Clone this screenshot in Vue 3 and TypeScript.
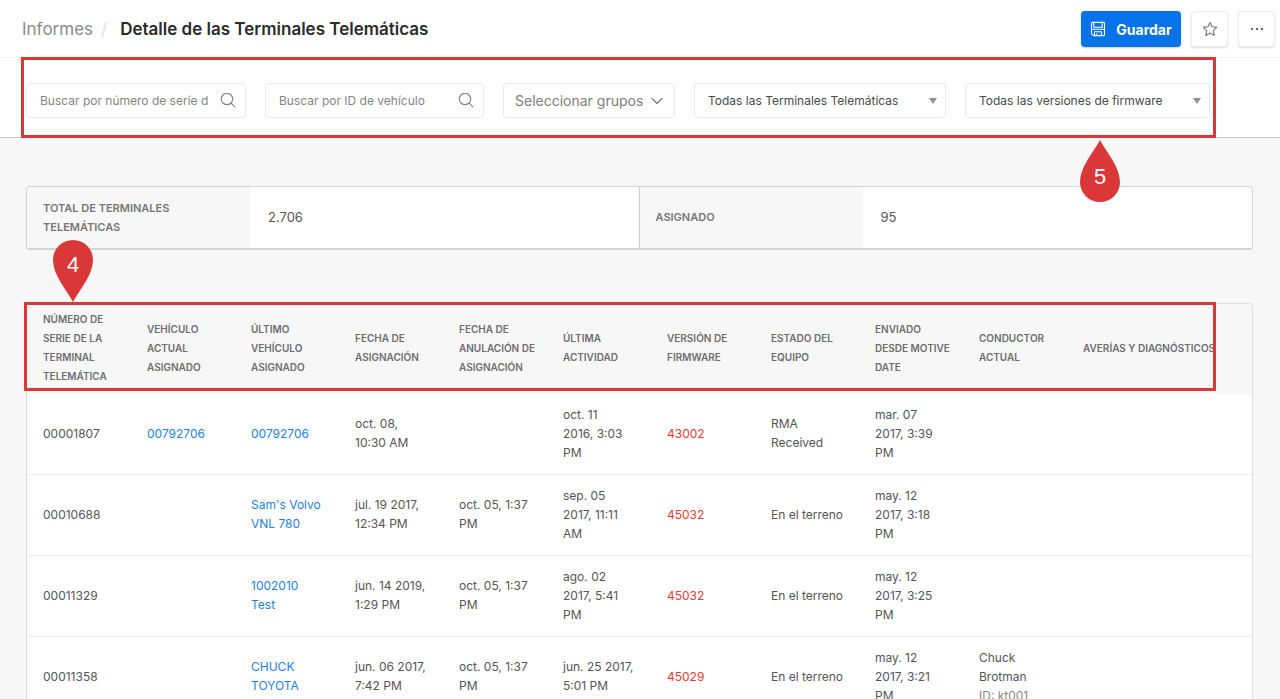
<script setup lang="ts">
import { ref } from 'vue'

interface Row {
  serial: string
  current: string
  last: string
  assigned: string
  unassigned: string
  activity: string
  firmware: string
  status: string
  shipped: string
  driver: string
  driverId: string
}

const columns: string[] = [
  'Número de\nserie de la\nterminal\ntelemática',
  'Vehículo\nactual\nasignado',
  'Último\nvehículo\nasignado',
  'Fecha de\nasignación',
  'Fecha de\nanulación de\nasignación',
  'Última\nactividad',
  'Versión de\nfirmware',
  'Estado del\nequipo',
  'Enviado\ndesde Motive\ndate',
  'Conductor\nactual',
  'Averías y diagnósticos',
]

const rows: Row[] = [
  {
    serial: '00001807', current: '00792706', last: '00792706',
    assigned: 'oct. 08,\n10:30 AM', unassigned: '', activity: 'oct. 11\n2016, 3:03\nPM',
    firmware: '43002', status: 'RMA\nReceived', shipped: 'mar. 07\n2017, 3:39\nPM',
    driver: '', driverId: '',
  },
  {
    serial: '00010688', current: '', last: "Sam's Volvo\nVNL 780",
    assigned: 'jul. 19 2017,\n12:34 PM', unassigned: 'oct. 05, 1:37\nPM', activity: 'sep. 05\n2017, 11:11\nAM',
    firmware: '45032', status: 'En el terreno', shipped: 'may. 12\n2017, 3:18\nPM',
    driver: '', driverId: '',
  },
  {
    serial: '00011329', current: '', last: '1002010\nTest',
    assigned: 'jun. 14 2019,\n1:29 PM', unassigned: 'oct. 05, 1:37\nPM', activity: 'ago. 02\n2017, 5:41\nPM',
    firmware: '45032', status: 'En el terreno', shipped: 'may. 12\n2017, 3:25\nPM',
    driver: '', driverId: '',
  },
  {
    serial: '00011358', current: '', last: 'CHUCK\nTOYOTA',
    assigned: 'jun. 06 2017,\n7:42 PM', unassigned: 'oct. 05, 1:37\nPM', activity: 'jun. 25 2017,\n5:01 PM',
    firmware: '45029', status: 'En el terreno', shipped: 'may. 12\n2017, 3:21\nPM',
    driver: 'Chuck\nBrotman', driverId: 'ID: kt001',
  },
]

const serialQuery = ref('')
const vehicleQuery = ref('')
const gateway = ref('all')
const firmware = ref('all')
</script>

<template>
  <div class="page">
    <header class="topbar">
      <nav class="crumbs">
        <a href="#" class="crumb">Informes</a>
        <span class="slash">/</span>
        <h1>Detalle de las Terminales Telemáticas</h1>
      </nav>
      <div class="actions">
        <button type="button" class="save">
          <svg width="16" height="16" viewBox="0 0 16 16" fill="none" stroke="currentColor" stroke-width="1.1" stroke-linejoin="round">
            <path d="M1.500 2.200a.8.8 0 0 1 .8-.8h11.400a.8.8 0 0 1 .8.8v11.600a.8.8 0 0 1-.8.8H3.500l-2-2z" />
            <path d="M3.800 1.400v4.800h8.400V1.400M1.500 8.300h13M4.500 14.600v-3.800h7v3.800M6.800 12.600v2" />
          </svg>
          Guardar
        </button>
        <button type="button" class="square" aria-label="Favorito">
          <svg width="16" height="16" viewBox="0 0 16 16" fill="none" stroke="#777" stroke-width="1.1" stroke-linejoin="round">
            <path d="M8 1.500l2 4.300 4.700.6-3.400 3.300.8 4.700L8 12.100l-4.100 2.300.8-4.700L1.300 6.400 6 5.800z" />
          </svg>
        </button>
        <button type="button" class="square" aria-label="Más opciones">
          <svg width="16" height="16" viewBox="0 0 16 16" fill="#444">
            <circle cx="3" cy="8" r="1.100" /><circle cx="8" cy="8" r="1.100" /><circle cx="13" cy="8" r="1.100" />
          </svg>
        </button>
      </div>
    </header>

    <section class="filters">
      <label class="field search">
        <input v-model="serialQuery" type="text" aria-label="Buscar por número de serie" placeholder="Buscar por número de serie d">
        <svg width="16" height="16" viewBox="0 0 16 16" fill="none" stroke="#888" stroke-width="1.200" stroke-linecap="round">
          <circle cx="7" cy="6" r="5.700" /><path d="M11.200 10.200l3.600 3.600" />
        </svg>
      </label>
      <label class="field search">
        <input v-model="vehicleQuery" type="text" aria-label="Buscar por ID de vehículo" placeholder="Buscar por ID de vehículo">
        <svg width="16" height="16" viewBox="0 0 16 16" fill="none" stroke="#888" stroke-width="1.200" stroke-linecap="round">
          <circle cx="7" cy="6" r="5.700" /><path d="M11.200 10.200l3.600 3.600" />
        </svg>
      </label>
      <button type="button" class="field groups">
        <span>Seleccionar grupos</span>
        <svg width="12" height="8" viewBox="0 0 12 8" fill="none" stroke="#777" stroke-width="1.100" stroke-linecap="round" stroke-linejoin="round">
          <path d="M1 1.500l5 5 5-5" />
        </svg>
      </button>
      <div class="field pick">
        <select v-model="gateway" aria-label="Terminales Telemáticas">
          <option value="all">Todas las Terminales Telemáticas</option>
        </select>
        <svg width="8" height="6" viewBox="0 0 8 6" fill="#8595a3"><path d="M0 0h8L4 6z" /></svg>
      </div>
      <div class="field pick">
        <select v-model="firmware" aria-label="Versiones de firmware">
          <option value="all">Todas las versiones de firmware</option>
        </select>
        <svg width="8" height="6" viewBox="0 0 8 6" fill="#8595a3"><path d="M0 0h8L4 6z" /></svg>
      </div>
      <div class="frame frame-filters"></div>
      <div class="pin pin-up">
        <svg width="40" height="62" viewBox="0 0 40 62"><path d="M20 0C27 13 40 27 40 42a20 20 0 0 1-40 0C0 27 13 13 20 0z" fill="#da3838" /></svg>
        <span>5</span>
      </div>
    </section>

    <main>
      <dl class="summary">
        <div class="stat">
          <dt>Total de terminales telemáticas</dt>
          <dd>2.706</dd>
        </div>
        <div class="stat">
          <dt>Asignado</dt>
          <dd>95</dd>
        </div>
      </dl>

      <div class="card">
        <table>
          <thead>
            <tr>
              <th v-for="c in columns" :key="c" scope="col">{{ c }}</th>
            </tr>
          </thead>
          <tbody>
            <tr v-for="r in rows" :key="r.serial">
              <td>{{ r.serial }}</td>
              <td><a v-if="r.current" href="#">{{ r.current }}</a></td>
              <td><a href="#">{{ r.last }}</a></td>
              <td>{{ r.assigned }}</td>
              <td>{{ r.unassigned }}</td>
              <td>{{ r.activity }}</td>
              <td class="alert">{{ r.firmware }}</td>
              <td>{{ r.status }}</td>
              <td>{{ r.shipped }}</td>
              <td>{{ r.driver }}<div v-if="r.driverId" class="muted">{{ r.driverId }}</div></td>
              <td></td>
            </tr>
          </tbody>
        </table>
        <div class="frame frame-columns"></div>
        <div class="pin pin-down">
          <svg width="40" height="62" viewBox="0 0 40 62"><path d="M20 62C27 49 40 35 40 20a20 20 0 0 0-40 0C0 35 13 49 20 62z" fill="#da3838" /></svg>
          <span>4</span>
        </div>
      </div>
    </main>
  </div>
</template>

<style>
body {
  margin: 0;
  background: #f7f7f7;
  overflow: hidden;
}
</style>

<style scoped>
.page {
  min-height: 100vh;
  background: #f7f7f7;
  color: #555;
  font-family: Inter, "Liberation Sans", sans-serif;
  font-size: 12px;
  line-height: 19px;
}
.page *,
.page *::before {
  box-sizing: border-box;
}
a {
  color: #1a82ea;
  text-decoration: none;
}
button,
input,
select {
  font-family: inherit;
}

.topbar {
  display: flex;
  align-items: center;
  justify-content: space-between;
  height: 58px;
  padding: 0 5px 0 22px;
  background: #fff;
  box-shadow: inset 0 -1px #f6f6f6;
}
.crumbs {
  display: flex;
  align-items: center;
  font-size: 17px;
  line-height: 24px;
}
.crumb {
  color: #8c8c8c;
}
.slash {
  margin: 0 13px 0 8px;
  color: #ddd;
}
h1 {
  margin: 0;
  color: #2b2b2b;
  font-size: 17px;
  font-weight: 600;
}
.actions {
  display: flex;
  gap: 10px;
}
.save,
.square {
  display: flex;
  align-items: center;
  justify-content: center;
  height: 36px;
  border-radius: 4px;
}
.save {
  gap: 10px;
  width: 100px;
  padding: 0;
  border: 0;
  background: #0673e8;
  box-shadow: 0 1px 2px rgba(0, 0, 0, 0.2);
  color: #fff;
  font-size: 14px;
  font-weight: 700;
}
.square {
  width: 37px;
  padding: 0;
  border: 1px solid #eee;
  background: #fff;
  box-shadow: 0 1px 2px rgba(0, 0, 0, 0.14);
}

.filters {
  position: relative;
  display: grid;
  grid-template-columns: minmax(0, 220fr) minmax(0, 219fr) minmax(0, 172fr) minmax(0, 252fr) minmax(0, 245fr);
  gap: 19px;
  padding: 25px 70px 19px 26px;
  border-bottom: 1px solid #ccc;
  background: #fff;
}
.field {
  display: flex;
  align-items: center;
  height: 35px;
  border: 1px solid #e9e9e9;
  border-radius: 4px;
  background: #fff;
}
.search {
  padding: 0 9px 0 13px;
  gap: 4px;
}
.search input {
  flex: 1;
  min-width: 0;
  padding: 0;
  border: 0;
  outline: 0;
  background: none;
  color: #444;
  font-size: 12px;
}
.search input::placeholder {
  color: #858585;
  opacity: 1;
}
.groups {
  justify-content: space-between;
  padding: 0 11px;
  color: #808080;
  font-size: 14px;
  white-space: nowrap;
}
.pick {
  position: relative;
}
.pick select {
  width: 100%;
  height: 100%;
  padding: 0 28px 0 13px;
  border: 0;
  outline: 0;
  appearance: none;
  background: none;
  color: #4a4a4a;
  font-size: 12px;
}
.pick svg {
  position: absolute;
  right: 8px;
  pointer-events: none;
}

main {
  padding: 48px 27px 0 26px;
}
.summary {
  display: grid;
  grid-template-columns: 1fr 1fr;
  margin: 0 0 53px;
  border: 1px solid #d4d4d4;
  border-bottom-width: 2px;
  border-radius: 4px;
  background: #fff;
  overflow: hidden;
}
.stat {
  display: grid;
  grid-template-columns: 223px 1fr;
  min-height: 61px;
}
.stat:first-child {
  border-right: 1px solid #ccc;
}
dt {
  display: flex;
  align-items: center;
  padding: 0 60px 0 16px;
  background: #f7f7f7;
  color: #777;
  font-size: 11px;
  font-weight: 600;
  text-transform: uppercase;
}
dd {
  display: flex;
  align-items: center;
  margin: 0;
  padding: 0 18px;
  font-size: 13px;
}

.card {
  position: relative;
  border: 1px solid #ddd;
  border-radius: 4px;
  background: #fff;
}
table {
  width: 100%;
  table-layout: fixed;
  border-collapse: separate;
  border-spacing: 0;
}
th,
td {
  padding: 0 0 2px 16px;
  text-align: left;
  vertical-align: middle;
  white-space: pre-line;
}
th {
  width: 104px;
  height: 90px;
  background: #f7f7f7;
  color: #6e6e6e;
  font-size: 10px;
  font-weight: 600;
  text-transform: uppercase;
}
th:last-child {
  width: auto;
  white-space: nowrap;
}
td {
  height: 81px;
  border-bottom: 1px solid #eee;
}
.alert {
  color: #ec3a30;
}
.muted {
  color: #888;
}

.frame {
  position: absolute;
  border: 3px solid #da3838;
  pointer-events: none;
}
.frame-filters {
  inset: -1px 64px -1px 21px;
}
.frame-columns {
  top: -2px;
  right: 36px;
  left: -3px;
  height: 89px;
}
.pin {
  position: absolute;
  width: 40px;
  height: 62px;
  color: #fff;
  font-family: "Liberation Sans", Arial, sans-serif;
  font-size: 22px;
  line-height: 24px;
  text-align: center;
}
.pin svg {
  position: absolute;
  inset: 0;
}
.pin span {
  position: absolute;
  right: 0;
  left: 0;
}
.pin-up {
  top: 82px;
  right: 160px;
}
.pin-up span {
  bottom: 13px;
}
.pin-down {
  top: -64px;
  left: 26px;
}
.pin-down span {
  top: 13px;
}
</style>
